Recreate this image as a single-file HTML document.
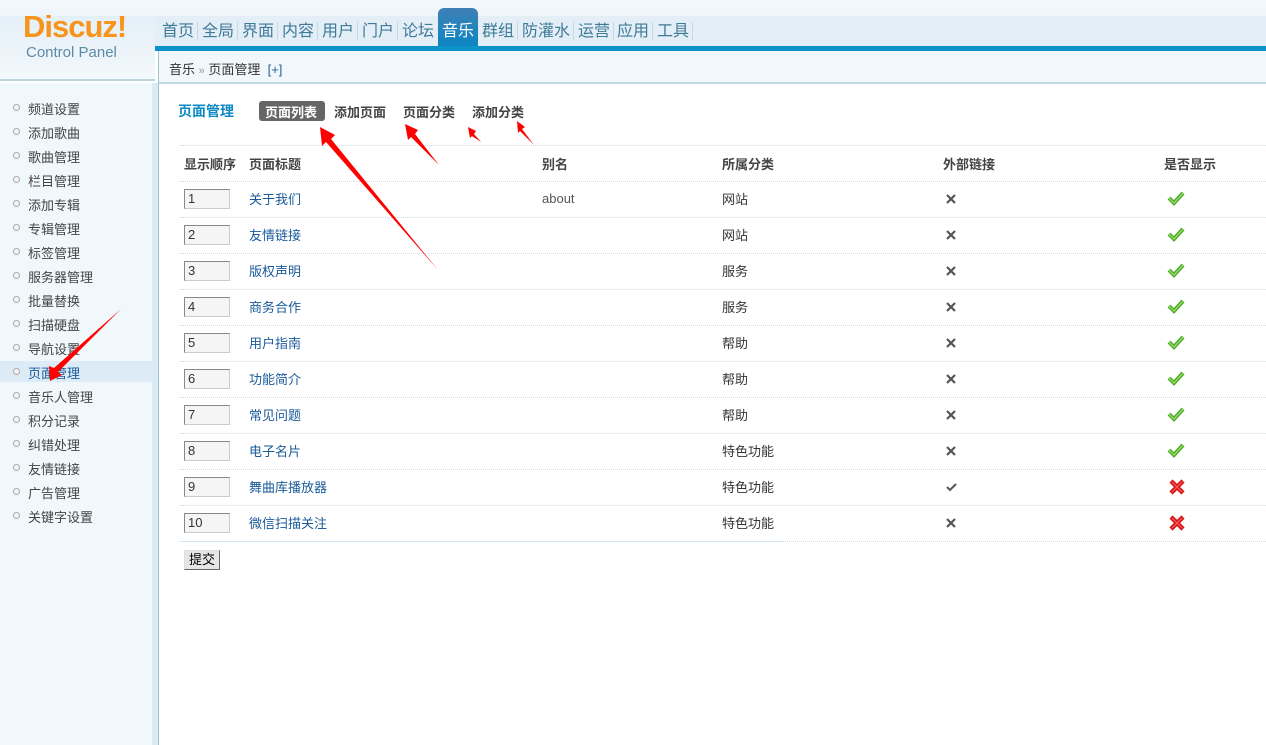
<!DOCTYPE html>
<html><head><meta charset="utf-8"><style>
*{margin:0;padding:0;box-sizing:border-box}
body{width:1266px;height:745px;overflow:hidden;background:#fff;font-family:"Liberation Sans","Noto Sans CJK SC",sans-serif;font-size:12px;color:#333;position:relative}
.a{position:absolute;white-space:nowrap}
#top{position:absolute;left:0;top:0;width:1266px;height:46px;background:linear-gradient(#f3f8fc,#e6f0f8)}
#top2{position:absolute;left:0;top:16px;width:1266px;height:30px;background:#e3eef7}
#blue{position:absolute;left:155px;top:46px;width:1111px;height:5px;background:#0d93cb}
#logoarea{position:absolute;left:0;top:16px;width:155px;height:65px;background:linear-gradient(#e4eff7,#f3f8fc);border-bottom:2px solid #bcd3e0}
#crumb{position:absolute;left:158px;top:51px;width:1108px;height:33px;background:#f1f8fc;border-bottom:2px solid #c5d9e4}
#side{position:absolute;left:0;top:83px;width:152px;height:662px;background:#f0f8fc}
#strip{position:absolute;left:152px;top:83px;width:6px;height:662px;background:#dbecf6}
#sb{position:absolute;left:158px;top:51px;width:1px;height:694px;background:#9fc3d6}
.nav{top:17px;font-size:16px;color:#3f7a97}
.sep{position:absolute;top:22px;width:1px;height:18px;background:#c7d9e5}
.mi{left:28px;font-size:13px;color:#444}
.dot{position:absolute;left:13px;width:7px;height:7px;border:1px solid #aaa;border-radius:50%;background:#f5f5f5}
.row{position:absolute;left:180px;width:1086px;height:0;border-top:1px dotted #c9dcea}
.inp{position:absolute;left:184px;width:46px;height:20px;border:1px solid #888;border-right-color:#ccc;border-bottom-color:#ccc;background:#f5f5f5;font-size:13px;padding-left:3px;line-height:18px;color:#333}
.lk{left:249px;font-size:13px;color:#1a5a9a}
.ct{left:722px;font-size:13px}
.th{top:154px;font-size:13px;font-weight:bold;color:#444}
</style></head><body>
<div id="top"></div><div id="top2"></div>
<div id="logoarea"></div>
<div class="a" style="left:23px;top:9px;font-size:31px;font-weight:bold;color:#f7941d;letter-spacing:-1px">Discuz!</div>
<div class="a" style="left:26px;top:44px;font-size:15px;color:#5b8aa4">Control Panel</div>
<div class="a" style="left:438px;top:8px;width:40px;height:40px;background:linear-gradient(#3f80b5,#0a86c4);border-radius:6px 6px 0 0"></div>
<div id="blue"></div>
<div class="a nav" style="left:162px">首页</div><div class="sep" style="left:197px"></div>
<div class="a nav" style="left:202px">全局</div><div class="sep" style="left:237px"></div>
<div class="a nav" style="left:242px">界面</div><div class="sep" style="left:277px"></div>
<div class="a nav" style="left:282px">内容</div><div class="sep" style="left:317px"></div>
<div class="a nav" style="left:322px">用户</div><div class="sep" style="left:357px"></div>
<div class="a nav" style="left:362px">门户</div><div class="sep" style="left:397px"></div>
<div class="a nav" style="left:402px">论坛</div>
<div class="a nav" style="left:442px;color:#fff">音乐</div>
<div class="a nav" style="left:482px">群组</div><div class="sep" style="left:517px"></div>
<div class="a nav" style="left:522px">防灌水</div><div class="sep" style="left:573px"></div>
<div class="a nav" style="left:578px">运营</div><div class="sep" style="left:613px"></div>
<div class="a nav" style="left:617px">应用</div><div class="sep" style="left:652px"></div>
<div class="a nav" style="left:657px">工具</div><div class="sep" style="left:692px"></div>
<div id="crumb"></div>
<div class="a" style="left:169px;top:59px;font-size:13px;color:#333">音乐 <span style="color:#999;font-size:11px">»</span> 页面管理 &nbsp;<span style="color:#2b5c9a">[+]</span></div>
<div id="side"></div><div id="strip"></div><div id="sb"></div>
<div class="a" style="left:0;top:361px;width:152px;height:21px;background:#dcebf6"></div>
<div class="dot" style="top:104px"></div><div class="a mi" style="top:99px">频道设置</div>
<div class="dot" style="top:128px"></div><div class="a mi" style="top:123px">添加歌曲</div>
<div class="dot" style="top:152px"></div><div class="a mi" style="top:147px">歌曲管理</div>
<div class="dot" style="top:176px"></div><div class="a mi" style="top:171px">栏目管理</div>
<div class="dot" style="top:200px"></div><div class="a mi" style="top:195px">添加专辑</div>
<div class="dot" style="top:224px"></div><div class="a mi" style="top:219px">专辑管理</div>
<div class="dot" style="top:248px"></div><div class="a mi" style="top:243px">标签管理</div>
<div class="dot" style="top:272px"></div><div class="a mi" style="top:267px">服务器管理</div>
<div class="dot" style="top:296px"></div><div class="a mi" style="top:291px">批量替换</div>
<div class="dot" style="top:320px"></div><div class="a mi" style="top:315px">扫描硬盘</div>
<div class="dot" style="top:344px"></div><div class="a mi" style="top:339px">导航设置</div>
<div class="dot" style="top:368px"></div><div class="a mi" style="top:363px;color:#1a5a9a">页面管理</div>
<div class="dot" style="top:392px"></div><div class="a mi" style="top:387px">音乐人管理</div>
<div class="dot" style="top:416px"></div><div class="a mi" style="top:411px">积分记录</div>
<div class="dot" style="top:440px"></div><div class="a mi" style="top:435px">纠错处理</div>
<div class="dot" style="top:464px"></div><div class="a mi" style="top:459px">友情链接</div>
<div class="dot" style="top:488px"></div><div class="a mi" style="top:483px">广告管理</div>
<div class="dot" style="top:512px"></div><div class="a mi" style="top:507px">关键字设置</div>

<div class="a" style="left:178px;top:101px;font-size:14px;font-weight:bold;color:#0d8ac4">页面管理</div>
<div class="a" style="left:259px;top:101px;width:66px;height:20px;background:#666;border-radius:3px"></div>
<div class="a" style="left:265px;top:102px;font-size:13px;font-weight:bold;color:#fff">页面列表</div>
<div class="a" style="left:334px;top:102px;font-size:13px;font-weight:bold;color:#444">添加页面</div>
<div class="a" style="left:403px;top:102px;font-size:13px;font-weight:bold;color:#444">页面分类</div>
<div class="a" style="left:472px;top:102px;font-size:13px;font-weight:bold;color:#444">添加分类</div>

<div class="row" style="top:145px"></div>
<div class="a th" style="left:184px">显示顺序</div><div class="a th" style="left:249px">页面标题</div><div class="a th" style="left:542px">别名</div><div class="a th" style="left:722px">所属分类</div><div class="a th" style="left:943px">外部链接</div><div class="a th" style="left:1164px">是否显示</div>
<div class="row" style="top:181px"></div><div class="row" style="top:217px"></div><div class="row" style="top:253px"></div><div class="row" style="top:289px"></div><div class="row" style="top:325px"></div><div class="row" style="top:361px"></div><div class="row" style="top:397px"></div><div class="row" style="top:433px"></div><div class="row" style="top:469px"></div><div class="row" style="top:505px"></div>
<div class="a" style="left:180px;top:541px;width:600px;height:1px;background:#d5e6f2"></div><div class="row" style="top:541px;left:780px;width:486px"></div>

<div class="inp" style="top:189px">1</div><div class="a lk" style="top:189px">关于我们</div><div class="a" style="left:542px;top:191px;font-size:13px;color:#555">about</div><div class="a ct" style="top:189px">网站</div>
<div class="inp" style="top:225px">2</div><div class="a lk" style="top:225px">友情链接</div><div class="a ct" style="top:225px">网站</div>
<div class="inp" style="top:261px">3</div><div class="a lk" style="top:261px">版权声明</div><div class="a ct" style="top:261px">服务</div>
<div class="inp" style="top:297px">4</div><div class="a lk" style="top:297px">商务合作</div><div class="a ct" style="top:297px">服务</div>
<div class="inp" style="top:333px">5</div><div class="a lk" style="top:333px">用户指南</div><div class="a ct" style="top:333px">帮助</div>
<div class="inp" style="top:369px">6</div><div class="a lk" style="top:369px">功能简介</div><div class="a ct" style="top:369px">帮助</div>
<div class="inp" style="top:405px">7</div><div class="a lk" style="top:405px">常见问题</div><div class="a ct" style="top:405px">帮助</div>
<div class="inp" style="top:441px">8</div><div class="a lk" style="top:441px">电子名片</div><div class="a ct" style="top:441px">特色功能</div>
<div class="inp" style="top:477px">9</div><div class="a lk" style="top:477px">舞曲库播放器</div><div class="a ct" style="top:477px">特色功能</div>
<div class="inp" style="top:513px">10</div><div class="a lk" style="top:513px">微信扫描关注</div><div class="a ct" style="top:513px">特色功能</div>
<div class="a" style="left:184px;top:550px;width:36px;height:20px;border:1px solid #666;border-top-color:#ddd;border-left-color:#ddd;background:#e6e6e6;font-size:13px;text-align:center;line-height:18px;color:#000">提交</div>

<svg class="a" style="left:0;top:0" width="1266" height="745">
<defs>
<g id="x"><path d="M-4 -4L4 4M4 -4L-4 4" stroke="#555" stroke-width="2.2"/></g>
<g id="ck"><path d="M-7 0L-2 5L7 -5" stroke="#4aa52a" stroke-width="4" fill="none"/><path d="M-7 0L-2 5L7 -5" stroke="#8fdc5a" stroke-width="1.5" fill="none"/></g>
<g id="rx"><path d="M-6 -6L6 6M6 -6L-6 6" stroke="#d81818" stroke-width="4.5"/><path d="M-5 -5L5 5M5 -5L-5 5" stroke="#f06060" stroke-width="1.2"/></g>
</defs>
<use href="#x" x="951" y="199"/><use href="#x" x="951" y="235"/><use href="#x" x="951" y="271"/><use href="#x" x="951" y="307"/><use href="#x" x="951" y="343"/><use href="#x" x="951" y="379"/><use href="#x" x="951" y="415"/><use href="#x" x="951" y="451"/><use href="#x" x="951" y="523"/>
<path d="M947 487L950 490L956 484" stroke="#555" stroke-width="2" fill="none"/>
<use href="#ck" x="1176" y="198"/><use href="#ck" x="1176" y="234"/><use href="#ck" x="1176" y="270"/><use href="#ck" x="1176" y="306"/><use href="#ck" x="1176" y="342"/><use href="#ck" x="1176" y="378"/><use href="#ck" x="1176" y="414"/><use href="#ck" x="1176" y="450"/>
<use href="#rx" x="1177" y="487"/><use href="#rx" x="1177" y="523"/>
<g fill="#f00">
<polygon points="320,127 335,135 331,139 438,270 326,142 322,146"/>
<polygon points="405,124 418,130 415,134 439,165 411,137 408,140"/>
<polygon points="468,127 476,131 474,134 481,142 472,136 470,138"/>
<polygon points="517,121 525,127 522,129 534,145 520,131 518,133"/>
<polygon points="50,381 49,366 54,368 121,309 58,372 62,375"/>
</g>
</svg>
</body></html>
